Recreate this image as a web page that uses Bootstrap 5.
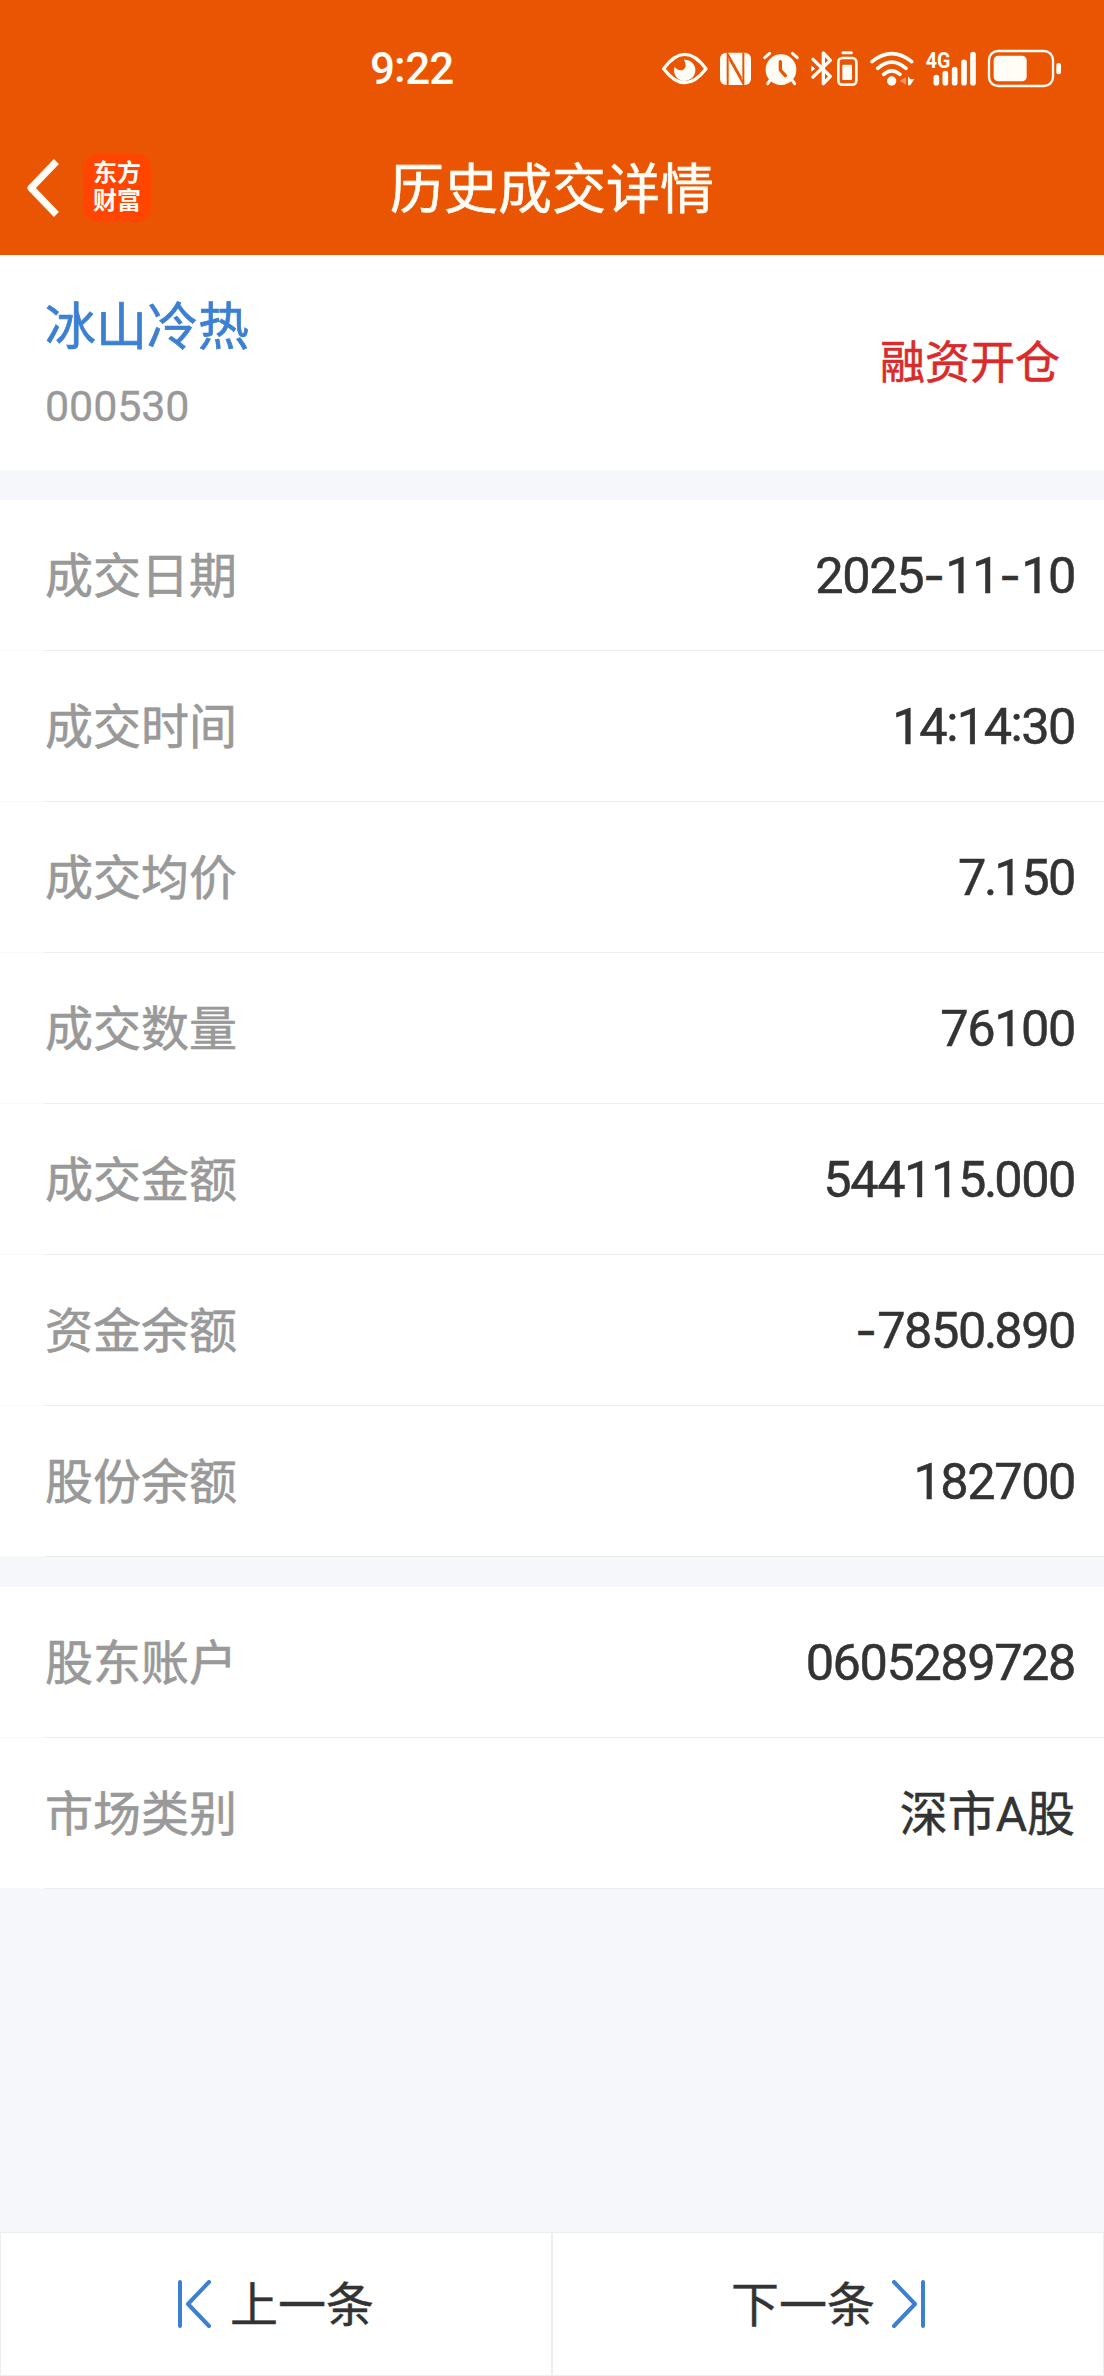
<!DOCTYPE html>
<html lang="zh-CN">
<head>
<meta charset="utf-8">
<meta name="viewport" content="width=device-width, initial-scale=1">
<title>历史成交详情</title>
<link rel="stylesheet" href="https://cdn.jsdelivr.net/npm/bootstrap@5.3.0/dist/css/bootstrap.min.css">
<style>
body{font-family:Roboto,"Noto Sans CJK SC",sans-serif;color:#333;background:#f6f7fa;line-height:1}
.screen{height:2376px}
.app-head{background:#ea5504;height:255px;color:#fffdf6}
.status-bar{height:121px;padding:15px 42px 0 370px}
.clock{font-size:44px;font-weight:500;letter-spacing:-1px;padding-top:2px}
.clock .sym{margin:0 .5px 0 0;position:relative;top:-2px}
.status-icons svg{height:39px;display:block}
.title-bar{height:134px}
.side{width:200px;padding-left:26px}
.app-logo{width:68px;height:68px;border-radius:15px;background:#ff4500;font-size:24px;font-weight:700;line-height:28px;margin-left:23px;padding-bottom:3px}
.page-title{font-size:54px;line-height:70px;padding-top:6px;-webkit-text-stroke:.6px #fffdf6}
.summary{height:215px;padding:3px 45px 0}
.stock-name{font-size:51px;line-height:60px;color:#3d80d2;padding-top:1px;-webkit-text-stroke:.7px #3d80d2}
.stock-code{font-size:43px;line-height:50px;color:#999;letter-spacing:-.1px;-webkit-text-stroke:.3px #999}
.trade-kind{font-size:45px;line-height:60px;color:#d92b2b;margin-right:-1px;-webkit-text-stroke:.6px #d92b2b}
.gap-band{height:30px}
.field{height:151px;padding:0 29px 0 45px;background:linear-gradient(90deg,#f9f9f9 45px,#ececec 45px) bottom/100% 1px no-repeat #fff}
.field-name{font-size:48px;line-height:60px;color:#999;padding-top:2px;-webkit-text-stroke:.6px #999}
.field-value{font-size:50.5px;line-height:60px;letter-spacing:-1.45px;-webkit-text-stroke:.5px #333}
.field-value .hy{font-family:Inter,sans-serif;font-size:48px;letter-spacing:0}
.field-value .co{position:relative;top:-3px;letter-spacing:-1.7px}
.field-value .dt{letter-spacing:-3px;margin-left:-1px;margin-right:0}
.field-value.han{font-size:48px;letter-spacing:0;padding-top:2px}
.pager{height:144px}
.pager .btn{border:1px solid #ececec;border-radius:0;font-size:48px;line-height:60px;color:#333;background:#fff;padding:0}
.pager .btn span{padding-top:3px;-webkit-text-stroke:.4px #333}
</style>
</head>
<body>
<div class="screen d-flex flex-column">
  <header class="app-head">
    <div class="status-bar d-flex align-items-center justify-content-between">
      <div class="clock">9<span class="sym">:</span>22</div>
      <div class="status-icons d-flex align-items-center">
        <svg width="48" viewBox="30 39 144 117" fill="none"><path d="M38 98Q101 12 165 98Q101 182 38 98Z" stroke="#fffdf6" stroke-width="10" stroke-linejoin="round"/><path d="M99 71A32 32 0 1 1 71 92Q82 107 97 101Q110 91 99 71Z" fill="#fffdf6"/></svg>
        <svg width="35" viewBox="201 39 105 117" style="margin-left:9px"><rect x="207" y="50" width="93" height="97" rx="18" fill="#fffdf6"/><path d="M230 147V54L271 127M277 50V143L236 70" stroke="#ea5504" stroke-width="6" fill="none"/><path d="M233 62L274 135" stroke="#fffdf6" stroke-width="0"/></svg>
        <svg width="40" viewBox="330 39 120 117" style="margin-left:8px" fill="none" stroke="#fffdf6" stroke-linecap="round"><circle cx="390" cy="101" r="46" fill="#fffdf6" stroke="none"/><path d="M341 65L356 52M424 52L439 65M358 132L350 143M423 132L431 143" stroke-width="9"/><path d="M388 77V102L403 119" stroke="#ea5504" stroke-width="10" stroke-linejoin="round"/></svg>
        <svg width="24" viewBox="477 39 72 117" style="margin-left:9px" fill="none" stroke="#fffdf6" stroke-width="10" stroke-linecap="round" stroke-linejoin="round"><path d="M486 70L538 121L517 143V51L538 73L486 123"/><path d="M483 92L491 98L483 104Z" stroke-width="3" fill="#fffdf6"/></svg>
        <svg width="25" viewBox="552 39 75 117" style="margin-left:1px" fill="none"><rect x="562" y="66" width="54" height="80" rx="12" stroke="#fffdf6" stroke-width="8"/><path d="M576 50H601" stroke="#fffdf6" stroke-width="9" stroke-linecap="round"/><rect x="574" y="86" width="29" height="46" rx="3" fill="#fffdf6"/></svg>
        <svg width="47" viewBox="24 39 141 117" style="margin-left:9px" fill="none" stroke="#fffdf6" stroke-width="11" stroke-linecap="round"><path d="M33 77Q92 29 152 77M50 97Q92 60 135 97M68 115Q92 94 117 115"/><circle cx="92" cy="135" r="14" fill="#fffdf6" stroke="none"/><path d="M135 123V146L116 134Z" fill="#fa9468" stroke="none"/><path d="M141 121L148 129H160L148 148H141Z" fill="#fffdf6" stroke="none"/></svg>
        <svg width="52" viewBox="192 39 156 117" style="margin-left:9px"><path d="M226 125V140M253 113V140M281 101V140M309 79V140M336 56V140" stroke="#fffdf6" stroke-width="17" stroke-linecap="round"/><text x="194" y="96" font-size="65" font-weight="700" fill="#fffdf6" stroke="#ea5504" stroke-width="6" paint-order="stroke" textLength="74" lengthAdjust="spacingAndGlyphs">4G</text></svg>
        <svg width="75" viewBox="378 39 225 117" style="margin-left:10px"><rect x="384" y="45" width="192" height="105" rx="27" fill="none" stroke="#fffdf6" stroke-width="7"/><rect x="398" y="59" width="99" height="77" rx="14" fill="#fffdf6"/><rect x="586" y="81" width="14" height="34" rx="6" fill="#fffdf6"/></svg>
      </div>
    </div>
    <nav class="title-bar d-flex align-items-center">
      <div class="side d-flex align-items-center">
        <svg width="34" height="58" viewBox="0 0 34 58" fill="none" stroke="#fffdf6" stroke-width="7" stroke-linejoin="round" stroke-linecap="square"><path d="M28 5L5 29L28 53"/></svg>
        <div class="app-logo d-flex flex-column justify-content-center text-center"><span>东方</span><span>财富</span></div>
      </div>
      <div class="page-title flex-fill text-center">历史成交详情</div>
      <div class="side"></div>
    </nav>
  </header>

  <section class="summary bg-white d-flex justify-content-between align-items-center">
    <div class="d-flex flex-column" style="gap:23px">
      <span class="stock-name">冰山冷热</span>
      <span class="stock-code">000530</span>
    </div>
    <span class="trade-kind">融资开仓</span>
  </section>
  <div class="gap-band"></div>
  <section>
    <div class="field d-flex align-items-center justify-content-between"><span class="field-name">成交日期</span><span class="field-value">2025<span class="hy">-</span>11<span class="hy">-</span>10</span></div>
    <div class="field d-flex align-items-center justify-content-between"><span class="field-name">成交时间</span><span class="field-value">14<span class="co">:</span>14<span class="co">:</span>30</span></div>
    <div class="field d-flex align-items-center justify-content-between"><span class="field-name">成交均价</span><span class="field-value">7<span class="dt">.</span>150</span></div>
    <div class="field d-flex align-items-center justify-content-between"><span class="field-name">成交数量</span><span class="field-value">76100</span></div>
    <div class="field d-flex align-items-center justify-content-between"><span class="field-name">成交金额</span><span class="field-value">544115<span class="dt">.</span>000</span></div>
    <div class="field d-flex align-items-center justify-content-between"><span class="field-name">资金余额</span><span class="field-value"><span class="hy">-</span>7850<span class="dt">.</span>890</span></div>
    <div class="field d-flex align-items-center justify-content-between"><span class="field-name">股份余额</span><span class="field-value">182700</span></div>
  </section>
  <div class="gap-band"></div>
  <section>
    <div class="field d-flex align-items-center justify-content-between"><span class="field-name">股东账户</span><span class="field-value">0605289728</span></div>
    <div class="field d-flex align-items-center justify-content-between"><span class="field-name">市场类别</span><span class="field-value han">深市A股</span></div>
  </section>

  <footer class="pager d-flex mt-auto">
    <button class="btn w-50 d-flex align-items-center justify-content-center" style="gap:19px">
      <svg width="33" height="48" viewBox="0 0 33 48" fill="none" stroke="#3d80d2" stroke-width="4" stroke-linecap="round" stroke-linejoin="round"><path d="M2 2V46M31 2L10 24L31 46"/></svg>
      <span>上一条</span>
    </button>
    <button class="btn w-50 d-flex align-items-center justify-content-center" style="gap:17px">
      <span>下一条</span>
      <svg width="33" height="48" viewBox="0 0 33 48" fill="none" stroke="#3d80d2" stroke-width="4" stroke-linecap="round" stroke-linejoin="round"><path d="M31 2V46M2 2L23 24L2 46"/></svg>
    </button>
  </footer>
</div>
<script src="https://cdn.jsdelivr.net/npm/bootstrap@5.3.0/dist/js/bootstrap.bundle.min.js"></script>
</body>
</html>
